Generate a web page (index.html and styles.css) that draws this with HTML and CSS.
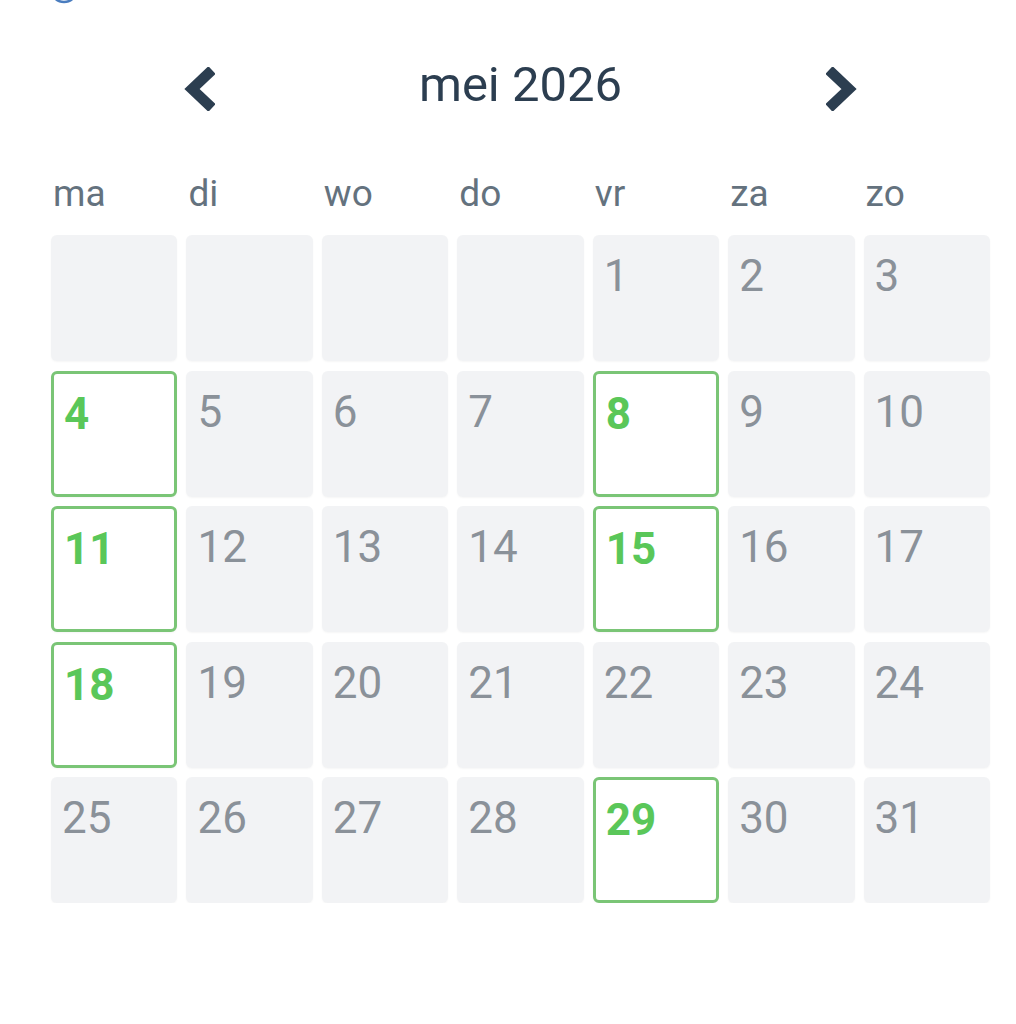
FILE: index.html
```html
<!DOCTYPE html>
<html lang="nl">
<head>
<meta charset="utf-8">
<title>Kalender</title>
<link rel="stylesheet" href="styles.css">
</head>
<body>
<div class="page">
  <div class="top-icon">
    <svg width="30" height="30" viewBox="0 0 30 30"><circle cx="15" cy="15" r="13" fill="none" stroke="#4a7dbf" stroke-width="2.5"/></svg>
  </div>
  <div class="calendar">
    <div class="cal-header">
      <button class="nav-btn" aria-label="vorige maand">
        <svg width="32" height="44" viewBox="0 0 32 44"><polyline points="29,3 9,22 29,41" fill="none" stroke="#2c3e50" stroke-width="10.5" stroke-linejoin="miter"/></svg>
      </button>
      <div class="cal-title">mei 2026</div>
      <button class="nav-btn" aria-label="volgende maand">
        <svg width="32" height="44" viewBox="0 0 32 44"><polyline points="3,3 23,22 3,41" fill="none" stroke="#2c3e50" stroke-width="10.5" stroke-linejoin="miter"/></svg>
      </button>
    </div>
    <div class="weekdays">
      <div>ma</div><div>di</div><div>wo</div><div>do</div><div>vr</div><div>za</div><div>zo</div>
    </div>
    <div class="days">
      <div class="day"></div>
      <div class="day"></div>
      <div class="day"></div>
      <div class="day"></div>
      <div class="day">1</div>
      <div class="day">2</div>
      <div class="day">3</div>
      <div class="day active">4</div>
      <div class="day">5</div>
      <div class="day">6</div>
      <div class="day">7</div>
      <div class="day active">8</div>
      <div class="day">9</div>
      <div class="day">10</div>
      <div class="day active">11</div>
      <div class="day">12</div>
      <div class="day">13</div>
      <div class="day">14</div>
      <div class="day active">15</div>
      <div class="day">16</div>
      <div class="day">17</div>
      <div class="day active">18</div>
      <div class="day">19</div>
      <div class="day">20</div>
      <div class="day">21</div>
      <div class="day">22</div>
      <div class="day">23</div>
      <div class="day">24</div>
      <div class="day">25</div>
      <div class="day">26</div>
      <div class="day">27</div>
      <div class="day">28</div>
      <div class="day active">29</div>
      <div class="day">30</div>
      <div class="day">31</div>
    </div>
  </div>
</div>
</body>
</html>
```
FILE: styles.css
```css
html, body {
  margin: 0;
  padding: 0;
  background: #ffffff;
}
body {
  font-family: Roboto, "Noto Sans", "Liberation Sans", sans-serif;
  overflow: hidden;
}
.page {
  width: 939px;
  margin-left: 51px;
}
.top-icon {
  height: 30px;
  margin-top: -26px;
  display: flex;
}
.top-icon svg {
  display: block;
  margin-left: -2px;
}
.cal-header {
  margin-top: 63px;
  height: 44px;
  display: flex;
  align-items: center;
  justify-content: space-between;
  padding: 0 132px;
}
.nav-btn {
  border: 0;
  background: none;
  padding: 0;
  width: 32px;
  height: 44px;
  display: flex;
  cursor: pointer;
}
.nav-btn svg {
  display: block;
}
.cal-title {
  font-size: 49px;
  line-height: 44px;
  color: #2c3e50;
  margin-bottom: 8px;
}
.weekdays {
  margin-top: 63px;
  display: grid;
  grid-template-columns: repeat(7, 1fr);
  column-gap: 9px;
  font-size: 37px;
  line-height: 40px;
  color: #64727e;
}
.weekdays div {
  padding-left: 2px;
}
.days {
  margin-top: 21px;
  display: grid;
  grid-template-columns: repeat(7, 1fr);
  gap: 9.5px 9px;
}
.day {
  box-sizing: border-box;
  height: 126px;
  background: #f2f3f5;
  border-radius: 6px;
  padding: 19px 11px 0;
  font-size: 44px;
  line-height: 44px;
  color: #8a9199;
  box-shadow: 0 1px 2px rgba(0, 0, 0, 0.04);
}
.day.active {
  background: #ffffff;
  border: 3px solid #7ac576;
  padding: 18px 10px 0;
  color: #5ac759;
  font-weight: 700;
}
```
